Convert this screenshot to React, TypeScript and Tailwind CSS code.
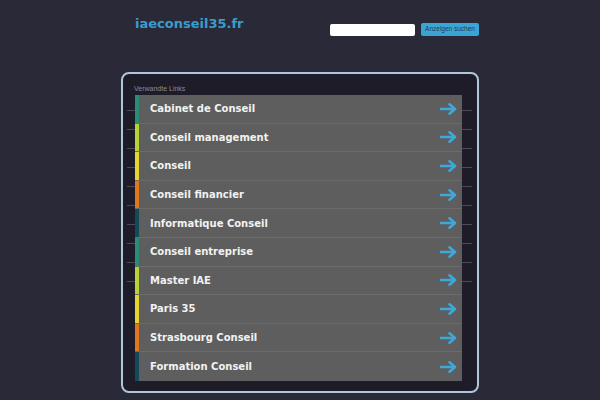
import React from 'react';

interface LinkItem {
  label: string;
  bar: string;
}

const links: LinkItem[] = [
  { label: 'Cabinet de Conseil', bar: 'bg-[#2a8c74]' },
  { label: 'Conseil management', bar: 'bg-[#b5d337]' },
  { label: 'Conseil', bar: 'bg-[#e6d52e]' },
  { label: 'Conseil financier', bar: 'bg-[#e0771e]' },
  { label: 'Informatique Conseil', bar: 'bg-[#134a5b]' },
  { label: 'Conseil entreprise', bar: 'bg-[#2a8c74]' },
  { label: 'Master IAE', bar: 'bg-[#b5d337]' },
  { label: 'Paris 35', bar: 'bg-[#e6d52e]' },
  { label: 'Strasbourg Conseil', bar: 'bg-[#e0771e]' },
  { label: 'Formation Conseil', bar: 'bg-[#134a5b]' },
];

const Arrow = () => (
  <svg width="17" height="12" viewBox="0 0 17 12" fill="none">
    <path d="M1 6H14.5" stroke="#3ea8d8" strokeWidth="2.6" strokeLinecap="round" />
    <path d="M9.5 1.3L15 6L9.5 10.7" stroke="#3ea8d8" strokeWidth="2.6" strokeLinecap="round" strokeLinejoin="round" />
  </svg>
);

const App: React.FC = () => {
  return (
    <div className="min-h-screen bg-[#2a2937] font-['DejaVu_Sans',sans-serif]">
      <div className="w-[358px] mx-auto">
        {/* Header */}
        <div className="h-[72px] flex justify-between">
          <h1 className="pt-[17px] pl-[14px] text-[13px] leading-none font-bold text-[#3a9ccd]">
            iaeconseil35.fr
          </h1>
          <div className="flex items-start gap-[6px] pt-[23px]">
            <input
              type="text"
              className="mt-[1px] w-[85px] h-[12px] rounded-[2px] bg-white border-0 outline-none"
            />
            <button className="w-[58px] h-[13px] rounded-[2px] bg-[#3aa5d5] text-[6.5px] leading-none text-[#1d3c52] font-['Liberation_Sans',sans-serif]">
              Anzeigen suchen
            </button>
          </div>
        </div>

        {/* Panel */}
        <div className="h-[321px] rounded-[8px] border-2 border-[#b3c6d9] bg-[#1d1c28]">
          <div className="h-[21px] pt-[11px] pl-[11px] text-[7px] leading-none text-[#8b8b99] font-['Liberation_Sans',sans-serif]">
            Verwandte Links
          </div>
          <div className="ml-[4px] pl-[8px] pr-[10px] w-[345px] bg-no-repeat bg-[length:100%_190px] bg-[repeating-linear-gradient(to_bottom,transparent_0px,transparent_15px,#4b4a58_15px,#4b4a58_16px,transparent_16px,transparent_19px)]">
            <div className="bg-[#5e5e5e]">
              {links.map((link, i) => (
                <div
                  key={link.label}
                  className={`h-[28.6px] flex items-center ${i < links.length - 1 ? 'border-b border-[#6b6b6b]' : ''}`}
                >
                  <div className={`w-[4px] h-full ${link.bar}`} />
                  <span className="pl-[11px] flex-1 text-[10px] font-bold text-[#f2f2f2]">
                    {link.label}
                  </span>
                  <div className="pr-[5px] flex items-center">
                    <Arrow />
                  </div>
                </div>
              ))}
            </div>
          </div>
        </div>
      </div>
    </div>
  );
};

export default App;
